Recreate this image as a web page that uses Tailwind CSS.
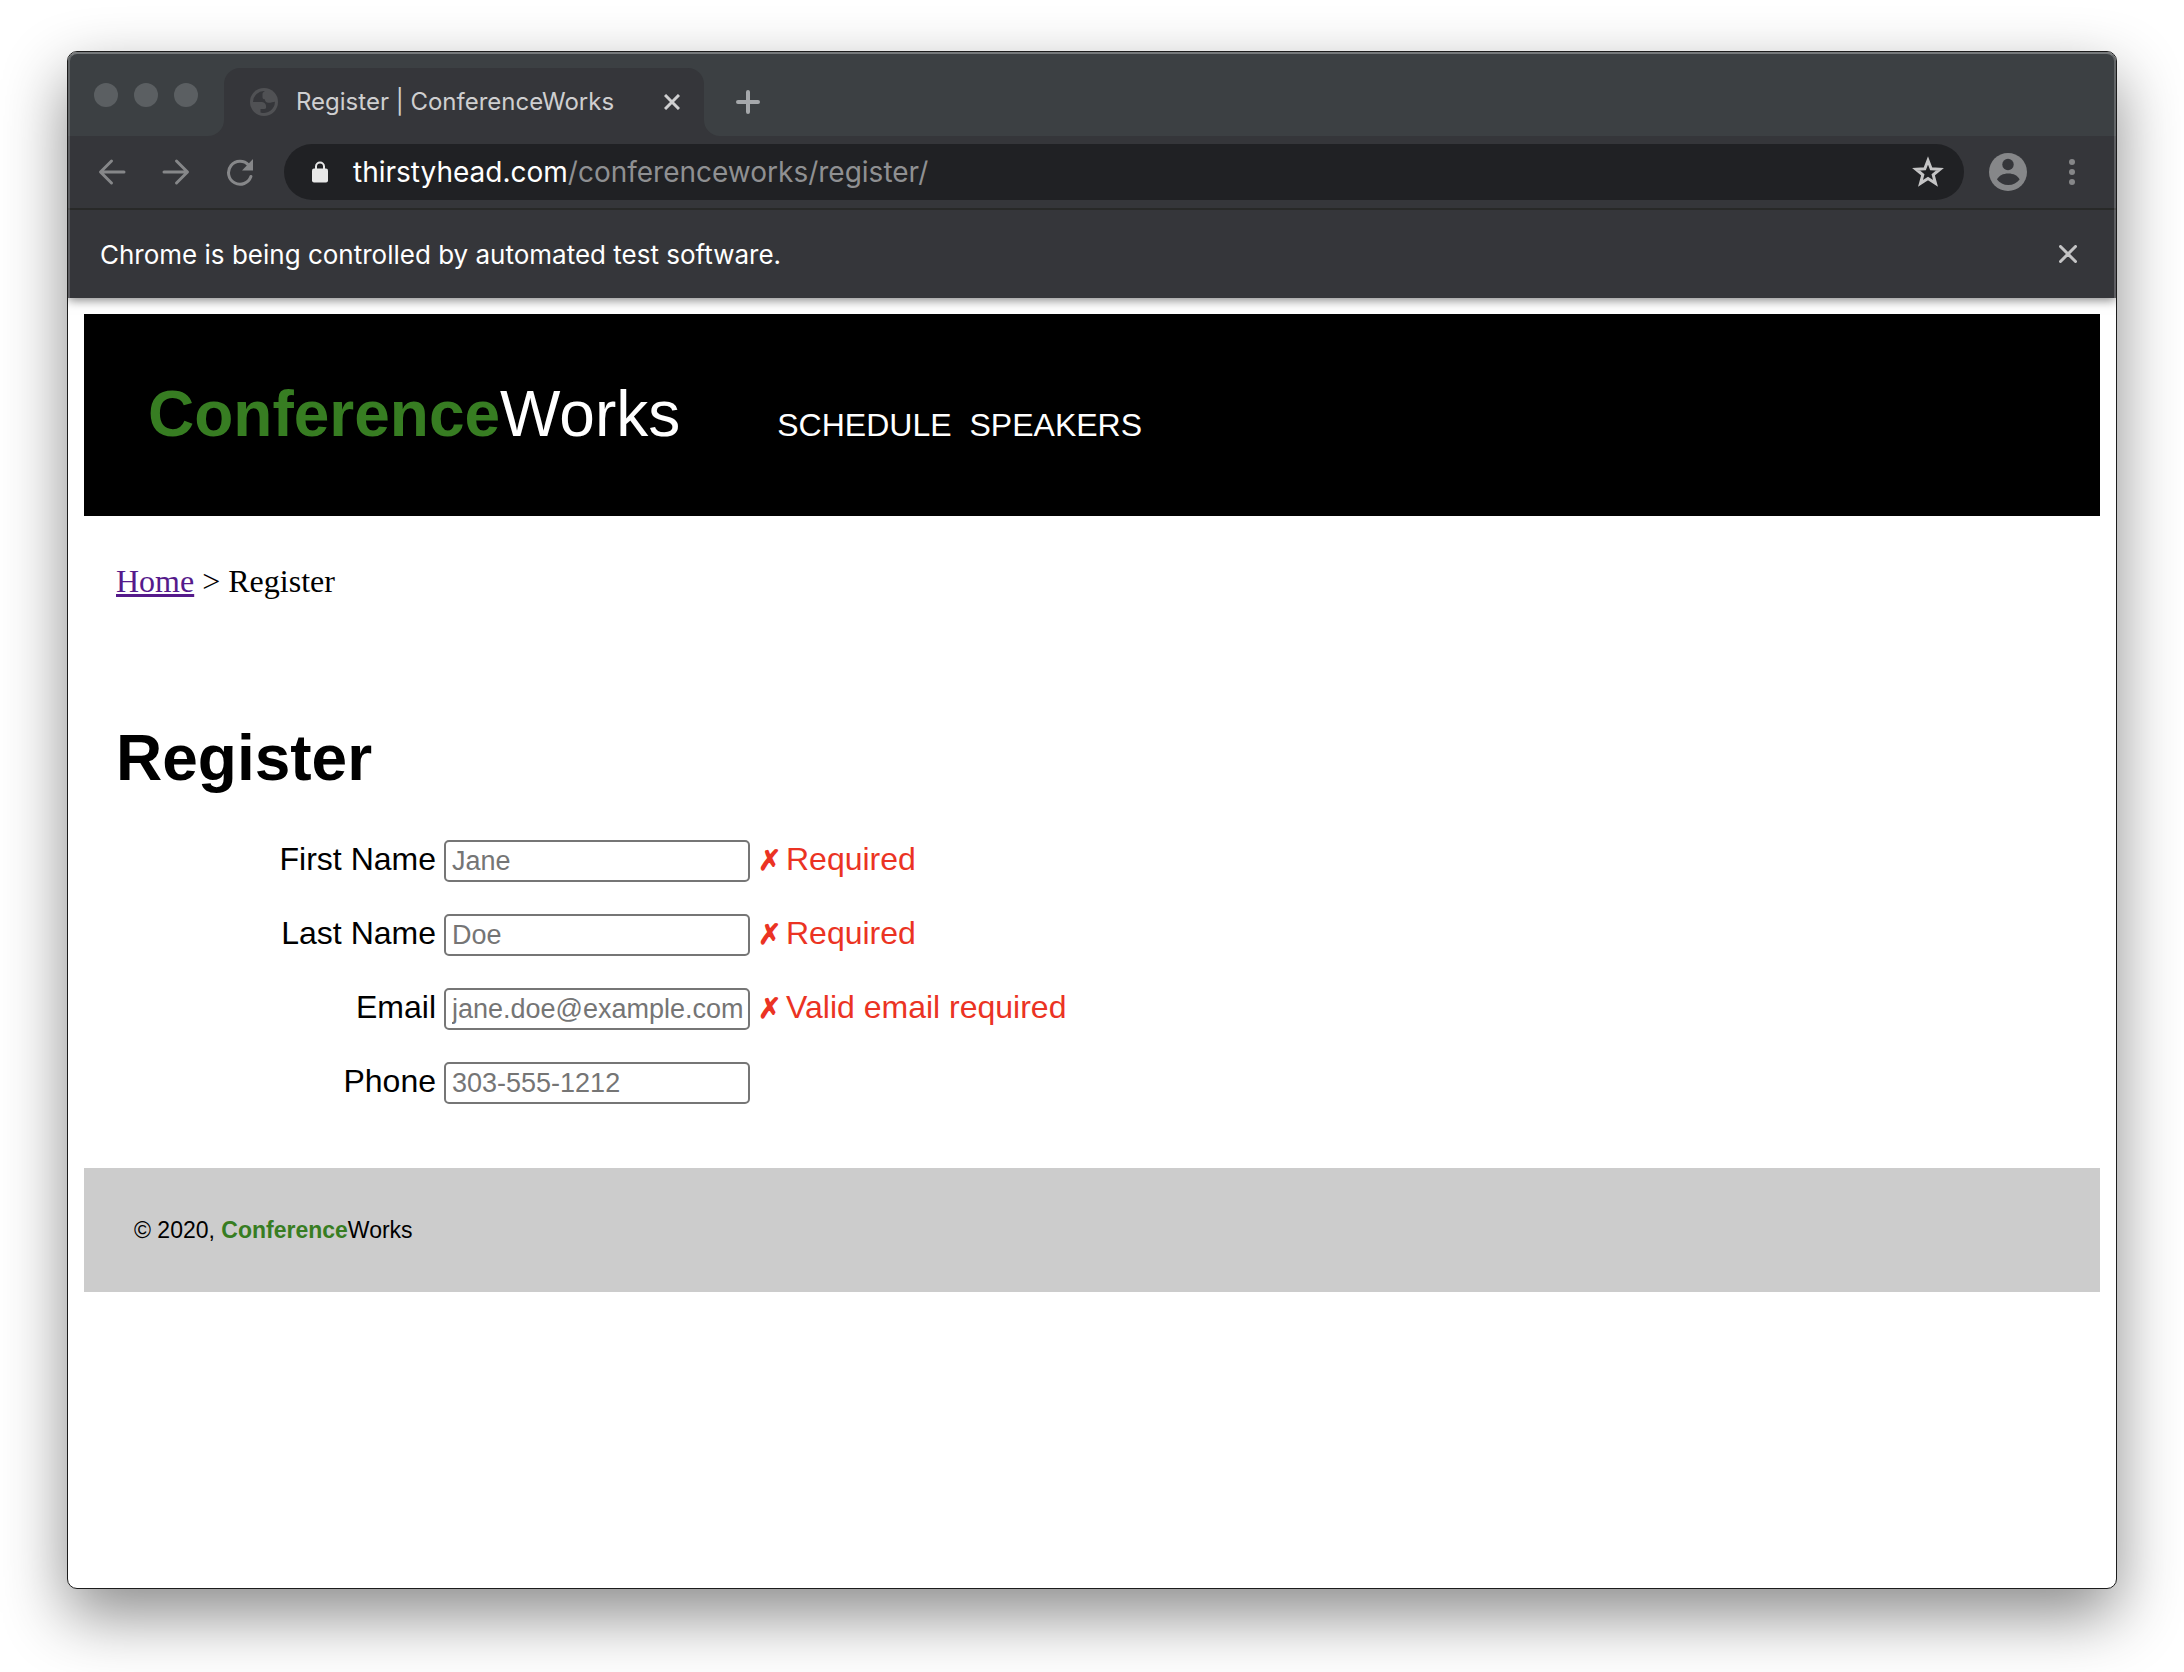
<!DOCTYPE html>
<html lang="en">
<head>
<meta charset="utf-8">
<meta name="viewport" content="width=device-width, initial-scale=1">
<title>Register | ConferenceWorks</title>
<script src="https://cdn.jsdelivr.net/npm/@tailwindcss/browser@4"></script>
</head>
<body class="bg-white text-black">
<div class="flex min-h-screen flex-col px-[67px] pt-[51px] pb-[83px]">
  <div class="flex flex-1 flex-col overflow-hidden rounded-[10px] border border-[#1c1c1c] bg-white shadow-[0_26px_64px_rgba(0,0,0,0.46)]">

    <!-- Browser chrome -->
    <header class="relative z-10 font-[Inter,sans-serif] shadow-[0_2px_10px_rgba(0,0,0,0.5)]">
      <div class="flex h-[84px] items-end bg-[#3c4043]">
        <div class="flex h-full w-[156px] items-start gap-4 pt-[31px] pl-[26px]">
          <button class="size-6 rounded-full bg-[#5b5f62]" aria-label="Close window"></button>
          <button class="size-6 rounded-full bg-[#5b5f62]" aria-label="Minimize window"></button>
          <button class="size-6 rounded-full bg-[#5b5f62]" aria-label="Zoom window"></button>
        </div>
        <div class="relative flex h-[68px] w-[480px] items-center rounded-t-2xl bg-[#35363a] pr-6 pl-[26px]">
          <svg class="absolute bottom-0 -left-4 size-4 text-[#35363a]" viewBox="0 0 16 16" fill="currentColor"><path d="M16 0v16H0A16 16 0 0 0 16 0z"/></svg>
          <svg class="absolute -right-4 bottom-0 size-4 text-[#35363a]" viewBox="0 0 16 16" fill="currentColor"><path d="M0 0v16h16A16 16 0 0 1 0 0z"/></svg>
          <svg class="mr-[18px] size-7 shrink-0" viewBox="0 0 28 28"><circle cx="14" cy="14" r="14" fill="#505154"/><path d="M3 14A11 11 0 0 1 15 3.100c-1.800 1-2.500 1.900-2.500 3v3.200c0 1.500 1 2 2.300 2 .4 2.300 1.200 3.500 3.700 3.500h1.800c1.400 0 2.200-1 4.600-1A11 11 0 0 1 10.500 24.400V21h3.600c1.700 0 2-1 2-2.300 0-3-1.600-4.700-5.600-4.700z" fill="#35363a"/></svg>
          <span class="flex-1 text-2xl whitespace-nowrap text-[#cfcfd0]">Register | ConferenceWorks</span>
          <button class="text-[#cfcfd0]" aria-label="Close tab"><svg class="size-4" viewBox="0 0 16 16" fill="none" stroke="currentColor" stroke-width="3"><path d="M1 1l14 14M15 1L1 15"/></svg></button>
        </div>
        <button class="mb-[22px] ml-8 text-[#a5a8ab]" aria-label="New tab"><svg class="size-6" viewBox="0 0 24 24" fill="none" stroke="currentColor" stroke-width="4" stroke-linecap="round"><path d="M12 2v20M2 12h20"/></svg></button>
      </div>

      <div class="flex h-[74px] items-center border-b-2 border-[#282928] bg-[#35363a] pr-[41px] pl-[30px] text-[#868789]">
        <button class="mr-9" aria-label="Back"><svg class="size-7" viewBox="0 0 28 28" fill="none" stroke="currentColor" stroke-width="3" stroke-linecap="round" stroke-linejoin="round"><path d="M13.500 3L2.500 14l11 11M3 14h23"/></svg></button>
        <button class="mr-9" aria-label="Forward"><svg class="size-7" viewBox="0 0 28 28" fill="none" stroke="currentColor" stroke-width="3" stroke-linecap="round" stroke-linejoin="round"><path d="M14.500 3l11 11-11 11M25 14H2"/></svg></button>
        <button class="mr-[30px]" aria-label="Reload"><svg class="size-7" viewBox="0 0 28 28"><path d="M22.700 7.200A11.500 11.500 0 1 0 24.900 18.500" fill="none" stroke="currentColor" stroke-width="3" stroke-linecap="round"/><path d="M27 1v11.500H16z" fill="currentColor"/></svg></button>
        <div class="mr-[25px] flex h-14 flex-1 items-center rounded-full bg-[#202124] pr-5 pl-7 text-[28px]">
          <svg class="mr-[25px] h-[22px] w-4 text-[#e8e8e8]" viewBox="0 0 16 22"><path d="M4 8V5.500a4 4 0 0 1 8 0V8" fill="none" stroke="currentColor" stroke-width="2"/><rect y="7.500" width="16" height="14" rx="2" fill="currentColor"/></svg>
          <p class="flex-1 text-[#8f9092]"><span class="text-white">thirstyhead.com</span>/conferenceworks/register/</p>
          <button class="text-[#c4c4c5]" aria-label="Bookmark this page"><svg class="size-8" viewBox="0 0 32 32" fill="none" stroke="currentColor" stroke-width="3"><path d="M16 4.500l3.200 8.200 8.800.5-6.800 5.600 2.300 8.500L16 22.500l-7.500 4.800 2.300-8.500L4 13.200l8.800-.5z"/></svg></button>
        </div>
        <button class="mr-[42px]" aria-label="Profile"><svg class="size-[38px]" viewBox="0 0 38 38"><circle cx="19" cy="19" r="19" fill="currentColor"/><circle cx="19" cy="11.500" r="5.700" fill="#35363a"/><path d="M8 26.500c2-4 6-6 11.300-6s9.300 2 11.300 6c-2.600 3.500-6.600 5.500-11.300 5.500S10.600 30 8 26.500z" fill="#35363a"/></svg></button>
        <button aria-label="Browser menu"><svg class="h-7 w-[6px]" viewBox="0 0 6 28" fill="currentColor"><circle cx="3" cy="4" r="3"/><circle cx="3" cy="14" r="3"/><circle cx="3" cy="24" r="3"/></svg></button>
      </div>

      <div class="flex h-[88px] items-center justify-between bg-[#35363a] pr-[39px] pl-8">
        <p class="text-[26px] text-white">Chrome is being controlled by automated test software.</p>
        <button class="text-[#c4c4c5]" aria-label="Dismiss"><svg class="size-[18px]" viewBox="0 0 18 18" fill="none" stroke="currentColor" stroke-width="3" stroke-linecap="round"><path d="M1.500 1.500l15 15M16.500 1.500l-15 15"/></svg></button>
      </div>
      <div class="pointer-events-none absolute inset-0 rounded-t-[9px] border-x-2 border-t-2 border-x-white/20 border-t-white/30"></div>
    </header>

    <!-- Page -->
    <div class="px-4 pt-4 font-['Liberation_Sans',Arial,sans-serif] text-[32px] leading-9">
      <header class="flex h-[202px] items-baseline bg-black pt-16 pl-16 text-white">
        <a href="#" class="mr-[97px] text-[64px] leading-[72px]"><b class="text-[#377d22]">Conference</b>Works</a>
        <nav class="flex gap-[18px] uppercase">
          <a href="#">Schedule</a>
          <a href="#">Speakers</a>
        </nav>
      </header>

      <main class="px-8">
        <nav class="pt-[47px] font-['Liberation_Serif','Times_New_Roman',serif]" aria-label="Breadcrumb"><a href="#" class="text-[#551a8b] underline">Home</a> &gt; Register</nav>
        <h1 class="mt-[123px] text-[64px] leading-[72px] font-bold">Register</h1>
        <form class="mt-[46px] flex flex-col gap-8">
          <div class="flex h-[42px] items-baseline">
            <label for="first" class="mr-2 w-80 text-right">First Name</label>
            <input id="first" type="text" placeholder="Jane" class="h-[42px] w-[306px] rounded-[5px] border-2 border-[#767676] pr-1 pl-[6px] text-[27px] placeholder:text-[#757575]">
            <p class="ml-2 flex items-baseline text-[#eb3323]"><span class="w-7 text-[28px] font-bold">✗</span>Required</p>
          </div>
          <div class="flex h-[42px] items-baseline">
            <label for="last" class="mr-2 w-80 text-right">Last Name</label>
            <input id="last" type="text" placeholder="Doe" class="h-[42px] w-[306px] rounded-[5px] border-2 border-[#767676] pr-1 pl-[6px] text-[27px] placeholder:text-[#757575]">
            <p class="ml-2 flex items-baseline text-[#eb3323]"><span class="w-7 text-[28px] font-bold">✗</span>Required</p>
          </div>
          <div class="flex h-[42px] items-baseline">
            <label for="email" class="mr-2 w-80 text-right">Email</label>
            <input id="email" type="email" placeholder="jane.doe@example.com" class="h-[42px] w-[306px] rounded-[5px] border-2 border-[#767676] pr-1 pl-[6px] text-[27px] placeholder:text-[#757575]">
            <p class="ml-2 flex items-baseline text-[#eb3323]"><span class="w-7 text-[28px] font-bold">✗</span>Valid email required</p>
          </div>
          <div class="flex h-[42px] items-baseline">
            <label for="phone" class="mr-2 w-80 text-right">Phone</label>
            <input id="phone" type="tel" placeholder="303-555-1212" class="h-[42px] w-[306px] rounded-[5px] border-2 border-[#767676] pr-1 pl-[6px] text-[27px] placeholder:text-[#757575]">
          </div>
        </form>
      </main>

      <footer class="mt-16 flex h-[124px] items-center bg-[#ccc] pl-[50px] text-[23px]">
        <p>© 2020, <b class="text-[#377d22]">Conference</b>Works</p>
      </footer>
    </div>
  </div>
</div>
</body>
</html>
